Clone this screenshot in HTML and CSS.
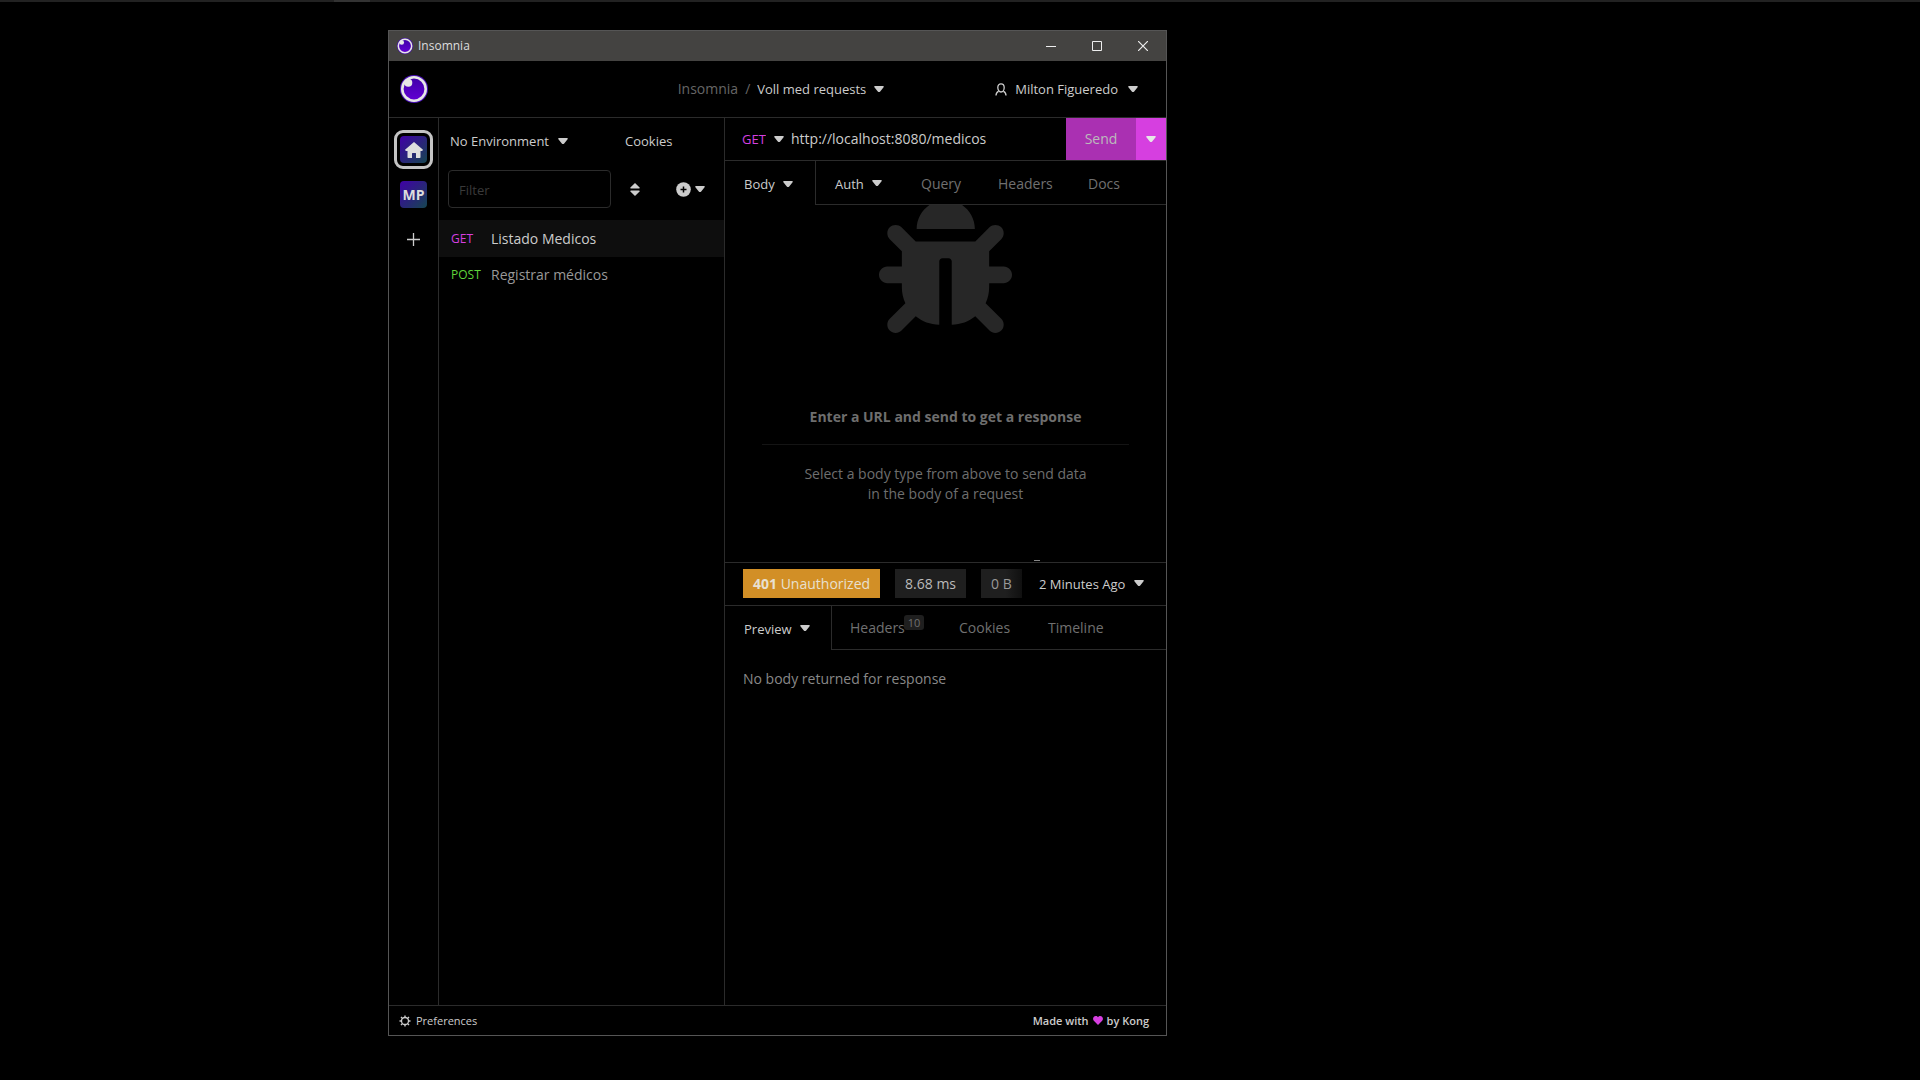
FILE: index.html
```html
<!DOCTYPE html>
<html lang="en">
<head>
<meta charset="utf-8">
<title>Insomnia</title>
<link rel="stylesheet" href="styles.css">
</head>
<body class="desktop">
<svg class="defs" aria-hidden="true">
  <defs>
    <linearGradient id="moon" x1="0" y1="0" x2="0" y2="1"><stop offset="0" stop-color="#4000a8"/><stop offset="1" stop-color="#6200d4"/></linearGradient>
    <symbol id="logo" viewBox="0 0 28 28">
      <circle cx="14" cy="14" r="14" fill="#4a10b8"/>
      <circle cx="14" cy="14" r="11.7" fill="url(#moon)" stroke="#e6e6e6" stroke-width="2.6"/>
      <circle cx="8.3" cy="7.8" r="4" fill="#e6e6e6"/>
    </symbol>
    <symbol id="caret" viewBox="0 0 10 7"><path d="M.8 0h8.400c.6 0 .8.8.4 1.200L6.200 5.500c-.7.700-1.700.700-2.400 0L.4 1.200C0 .8.2 0 .8 0z" fill="currentColor"/></symbol>
  </defs>
</svg>
<div class="edge"><span class="edge-tab"></span></div>
<div class="window">
  <header class="titlebar">
    <svg class="title-logo"><use href="#logo"/></svg>
    <span class="title">Insomnia</span>
    <div class="controls">
      <button class="control" aria-label="Minimize"><svg width="10" height="10" viewBox="0 0 10 10"><path d="M0 5.500h10" stroke="currentColor"/></svg></button>
      <button class="control" aria-label="Maximize"><svg width="10" height="10" viewBox="0 0 10 10"><path d="M.5.5h9v9h-9z" fill="none" stroke="currentColor"/></svg></button>
      <button class="control" aria-label="Close"><svg width="10" height="10" viewBox="0 0 10 10"><path d="M0 0l10 10M10 0L0 10" stroke="currentColor" stroke-width="1.200"/></svg></button>
    </div>
  </header>

  <div class="appbar">
    <svg class="app-logo"><use href="#logo"/></svg>
    <nav class="crumbs">
      <a class="crumb" href="#">Insomnia</a><span class="slash">/</span>
      <button class="menu">Voll med requests<svg class="caret"><use href="#caret"/></svg></button>
    </nav>
    <button class="menu account"><svg class="person" viewBox="0 0 12 13"><path d="M1 12.500c0-2 .8-3.400 2.400-4.200M11 12.500c0-2-.8-3.400-2.400-4.200M6 .8c2 0 3.200 1.500 3.200 3.700S8 9 6 9 2.800 6.700 2.800 4.500 4 .8 6 .8z" fill="none" stroke="currentColor" stroke-width="1.300"/></svg>Milton Figueredo<svg class="caret"><use href="#caret"/></svg></button>
  </div>

  <div class="workspace">
    <nav class="rail">
      <a class="home" href="#" aria-label="Home"><span class="tile"><svg width="18" height="16" viewBox="0 0 18 16"><path d="M9 0l9 7.800-.8 1.200H15.500v6.200q0 .8-.8.8H11v-4.500q0-.5-.5-.5h-3q-.5 0-.5.5V16H3.300q-.8 0-.8-.8V9H.8L0 7.800z" fill="#dedede"/></svg></span></a>
      <a class="tile" href="#">MP</a>
      <button class="add" aria-label="Add organization"><svg width="13" height="13" viewBox="0 0 13 13"><path d="M6.500 0v13M0 6.500h13" stroke="currentColor" stroke-width="1.300"/></svg></button>
    </nav>

    <aside class="sidebar">
      <div class="env">
        <label class="picker env-picker"><select class="select" aria-label="Environment"><option>No Environment</option></select><svg class="caret"><use href="#caret"/></svg></label>
        <button class="menu">Cookies</button>
      </div>
      <div class="filter">
        <input class="filter-input" type="text" placeholder="Filter" aria-label="Filter">
        <button class="tool sort" aria-label="Sort"><svg width="10" height="13" viewBox="0 0 10 13"><path d="M5 0l4.600 4.500q.5 1-.5 1H.9q-1 0-.5-1zM5 13L.4 8.500q-.5-1 .5-1h8.200q1 0 .5 1z" fill="currentColor"/></svg></button>
        <button class="tool create" aria-label="Create"><svg width="15" height="15" viewBox="0 0 15 15"><circle cx="7.500" cy="7.500" r="7.300" fill="currentColor"/><path d="M7.500 4.500v6M4.500 7.500h6" stroke="#000" stroke-width="1.500"/></svg><svg class="caret"><use href="#caret"/></svg></button>
      </div>
      <ul class="requests">
        <li><a class="request active" href="#"><span class="verb get">GET</span>Listado Medicos</a></li>
        <li><a class="request" href="#"><span class="verb post">POST</span>Registrar médicos</a></li>
      </ul>
    </aside>

    <main class="panes">
      <section class="pane">
        <form class="urlbar">
          <label class="picker get"><select class="select method" aria-label="Method"><option>GET</option></select><svg class="caret"><use href="#caret"/></svg></label>
          <input class="url" type="text" value="http://localhost:8080/medicos" aria-label="URL">
          <button class="send" type="button">Send</button>
          <button class="send-more" type="button" aria-label="Send options"><svg class="caret"><use href="#caret"/></svg></button>
        </form>
        <div class="tabs">
          <button class="tab current body-tab">Body<svg class="caret"><use href="#caret"/></svg></button>
          <div class="tab-rest request-tabs">
            <button class="tab lit">Auth<svg class="caret"><use href="#caret"/></svg></button>
            <button class="tab">Query</button>
            <button class="tab">Headers</button>
            <button class="tab">Docs</button>
          </div>
        </div>
        <div class="empty">
          <svg class="bug" viewBox="0 0 512 512"><path fill="currentColor" d="M511.988 288.900c-.478 17.430-15.217 31.100-32.653 31.100H424v16c0 21.864-4.882 42.584-13.600 61.145l60.228 60.228c12.496 12.497 12.496 32.758 0 45.255-12.498 12.497-32.759 12.496-45.256 0l-54.736-54.736C345.886 467.965 314.351 480 280 480V236c0-6.627-5.373-12-12-12h-24c-6.627 0-12 5.373-12 12v244c-34.351 0-65.886-12.035-90.636-32.108l-54.736 54.736c-12.498 12.497-32.759 12.496-45.256 0-12.496-12.497-12.496-32.758 0-45.255l60.228-60.228C92.882 378.584 88 357.864 88 336v-16H32.666C15.230 320 .491 306.330.013 288.900-.484 270.816 14.028 256 32 256h56v-58.745l-46.628-46.628c-12.496-12.497-12.496-32.758 0-45.255 12.498-12.497 32.758-12.497 45.256 0L141.255 160h229.489l54.627-54.627c12.498-12.497 32.758-12.497 45.256 0 12.496 12.497 12.496 32.758 0 45.255L424 197.255V256h56c17.972 0 32.484 14.816 31.988 32.900zM257 0c-61.856 0-112 50.144-112 112h224C369 50.144 318.856 0 257 0z"/></svg>
          <strong class="empty-title">Enter a URL and send to get a response</strong>
          <hr class="rule">
          <p class="empty-text">Select a body type from above to send data<br>in the body of a request</p>
        </div>
        <span class="grip"></span>
      </section>

      <section class="pane response">
        <div class="status">
          <span class="tag warn"><b>401</b> Unauthorized</span>
          <span class="tag">8.68 ms</span>
          <span class="tag faded">0 B</span>
          <label class="picker history"><select class="select" aria-label="Response history"><option>2 Minutes Ago</option></select><svg class="caret"><use href="#caret"/></svg></label>
        </div>
        <div class="tabs">
          <button class="tab current preview-tab">Preview<svg class="caret"><use href="#caret"/></svg></button>
          <div class="tab-rest response-tabs">
            <button class="tab">Headers<span class="count">10</span></button>
            <button class="tab">Cookies</button>
            <button class="tab">Timeline</button>
          </div>
        </div>
        <p class="message">No body returned for response</p>
      </section>
    </main>
  </div>

  <footer class="footer">
    <button class="prefs"><svg width="12" height="12" viewBox="0 0 12 12"><circle cx="6" cy="6" r="3.500" fill="none" stroke="currentColor" stroke-width="1.300"/><path d="M6 .5v2M6 9.500v2M.5 6h2M9.500 6h2M2 2l1.300 1.300M8.700 8.700l1.300 1.300M2 10l1.300-1.300M8.700 3.300l1.300-1.300" stroke="currentColor" stroke-width="1.400"/></svg>Preferences</button>
    <a class="kong" href="#">Made with<svg width="10" height="9" viewBox="0 0 10 9"><path d="M5 9L.8 4.800C-1 2.500.8 0 2.700 0 3.800 0 4.500.5 5 1.300 5.500.5 6.200 0 7.300 0c1.900 0 3.700 2.500 1.900 4.800z" fill="#d63fe0"/></svg>by Kong</a>
  </footer>
</div>
</body>
</html>
```
FILE: styles.css
```css
* { box-sizing: border-box; }

.desktop {
  margin: 0;
  min-height: 100vh;
  background: #000;
  color: #ccc;
  font: 14px/20px "Open Sans", "Noto Sans", sans-serif;
  overflow: hidden;
}
.defs { position: absolute; width: 0; height: 0; }
button, input, select { font: inherit; color: inherit; background: none; border: 0; padding: 0; margin: 0; }
a { color: inherit; text-decoration: none; }
svg { flex: none; }

.edge { display: flex; height: 2px; padding-left: 334px; background: #222; }
.edge-tab { width: 36px; background: #333; }

.window {
  position: absolute;
  top: 30px; right: 753px; bottom: 44px; left: 388px;
  display: flex;
  flex-direction: column;
  border: 1px solid #555;
}

.titlebar { display: flex; align-items: center; height: 30px; padding-left: 8px; background: #444341; flex: none; }
.title-logo { width: 16px; height: 16px; }
.title { margin-left: 5px; font-size: 12px; color: #ddd; }
.controls { display: flex; margin-left: auto; }
.control { display: flex; align-items: center; justify-content: center; width: 46px; height: 30px; color: #eee; }

.caret { width: 10px; height: 7px; }
.menu, .picker { display: flex; align-items: center; gap: 8px; font-size: 13px; white-space: nowrap; }
.select { appearance: none; outline: 0; }

.appbar {
  display: grid;
  grid-template-columns: 1fr auto 1fr;
  align-items: center;
  height: 57px;
  flex: none;
  padding: 0 28px 0 11px;
  border-bottom: 1px solid #2b2b2b;
}
.app-logo { width: 28px; height: 28px; }
.crumbs { display: flex; align-items: center; padding-left: 24px; }
.crumb, .slash { color: #666; }
.slash { margin: 0 7px; }
.account { justify-self: end; gap: 10px; }
.person { width: 12px; height: 13px; margin-right: -2px; }

.workspace { display: flex; flex: 1; min-height: 0; }
.rail { display: flex; flex-direction: column; align-items: center; width: 50px; padding-top: 12px; border-right: 1px solid #2b2b2b; flex: none; }
.home { display: flex; align-items: center; justify-content: center; width: 39px; height: 39px; margin-bottom: 12px; border: 3px solid #c4c4c4; border-radius: 9px; }
.tile {
  display: flex; align-items: center; justify-content: center;
  width: 27px; height: 27px;
  border-radius: 4px;
  background: linear-gradient(135deg, #4000a8, #154650);
  color: #ddd; font-weight: 700;
}
.add { display: flex; margin-top: 25px; }

.sidebar { width: 286px; border-right: 1px solid #2b2b2b; flex: none; }
.env { display: flex; align-items: center; height: 46px; padding-left: 11px; }
.env-picker { width: 175px; }
.filter { display: flex; align-items: center; height: 56px; padding: 0 19px 6px 9px; }
.filter-input { flex: 1; min-width: 0; height: 38px; padding: 2px 10px 0; border: 1px solid #2b2b2b; border-radius: 4px; font-size: 13px; }
.filter-input::placeholder { color: #3a3a3a; opacity: 1; }
.tool { display: flex; align-items: center; gap: 4px; }
.sort { margin: 0 36px 0 19px; }
.requests { margin: 0; padding: 0; list-style: none; }
.request { display: flex; align-items: center; height: 36px; padding-left: 12px; color: #999; }
.active { height: 37px; background: #0e0e0e; color: #ccc; }
.verb { width: 40px; font-size: 12px; }
.get { color: #d63fe0; }
.get .caret { color: #ccc; }
.post { color: #5fd43a; }

.panes { display: flex; flex-direction: column; flex: 1; min-width: 0; }
.pane { position: relative; display: flex; flex-direction: column; flex: 1 1 0; min-height: 0; overflow: hidden; }
.response { margin-top: 1px; border-top: 1px solid #2b2b2b; }
.urlbar { display: flex; align-items: stretch; height: 43px; padding-left: 17px; border-bottom: 1px solid #2b2b2b; flex: none; }
.url { flex: 1; min-width: 0; margin-left: 7px; outline: 0; }
.send { width: 70px; background: #aa30b2; color: #bbb; }
.send-more { display: flex; align-items: center; justify-content: center; width: 30px; background: #d63fe0; color: #e6e6e6; }

.tabs { display: flex; height: 44px; flex: none; }
.tab { display: flex; align-items: center; gap: 8px; padding: 2px 0 0 18px; color: #707070; white-space: nowrap; }
.current, .lit { padding-left: 19px; color: #ccc; font-size: 13px; }
.current { border-right: 1px solid #2b2b2b; }
.body-tab { width: 91px; }
.preview-tab { width: 107px; }
.tab-rest { display: grid; flex: 1; border-bottom: 1px solid #2b2b2b; }
.request-tabs { grid-template-columns: 87px 77px 90px 1fr; }
.response-tabs { grid-template-columns: 109px 89px 1fr; }
.count { align-self: start; margin: 7px 0 0 -9px; padding: 0 4px; border-radius: 3px; background: #1f1f1f; font-size: 11px; line-height: 15px; }

.empty { display: flex; flex-direction: column; align-items: center; justify-content: center; flex: 1; min-height: 0; overflow: hidden; color: #6e6e6e; }
.bug { width: 133px; height: 133px; color: #272727; }
.empty-title { margin-top: 74px; }
.rule { width: 83%; margin: 17px 0 19px; border: 0; border-top: 1px solid #141414; flex: none; }
.empty-text { margin: 0 0 62px; text-align: center; }
.grip { position: absolute; right: 126px; bottom: 0; width: 6px; height: 1px; background: #888; }

.status { display: flex; align-items: center; gap: 15px; height: 43px; padding-left: 18px; border-bottom: 1px solid #2b2b2b; flex: none; white-space: nowrap; }
.tag { padding: 0 10px; line-height: 29px; background: #1f1f1f; color: #bbb; }
.warn { background: #d28f26; color: #e8e0d0; }
.faded { background: linear-gradient(90deg, #1f1f1f 60%, #101010); color: #999; }
.history { margin: 0 22px 0 auto; }
.message { margin: 19px 18px; color: #888; }

.footer { display: flex; align-items: center; justify-content: space-between; height: 30px; padding: 0 17px 0 10px; border-top: 1px solid #2b2b2b; flex: none; font-size: 11px; }
.prefs, .kong { display: flex; align-items: center; gap: 5px; }
.kong { gap: 4px; font-weight: 600; }
```
